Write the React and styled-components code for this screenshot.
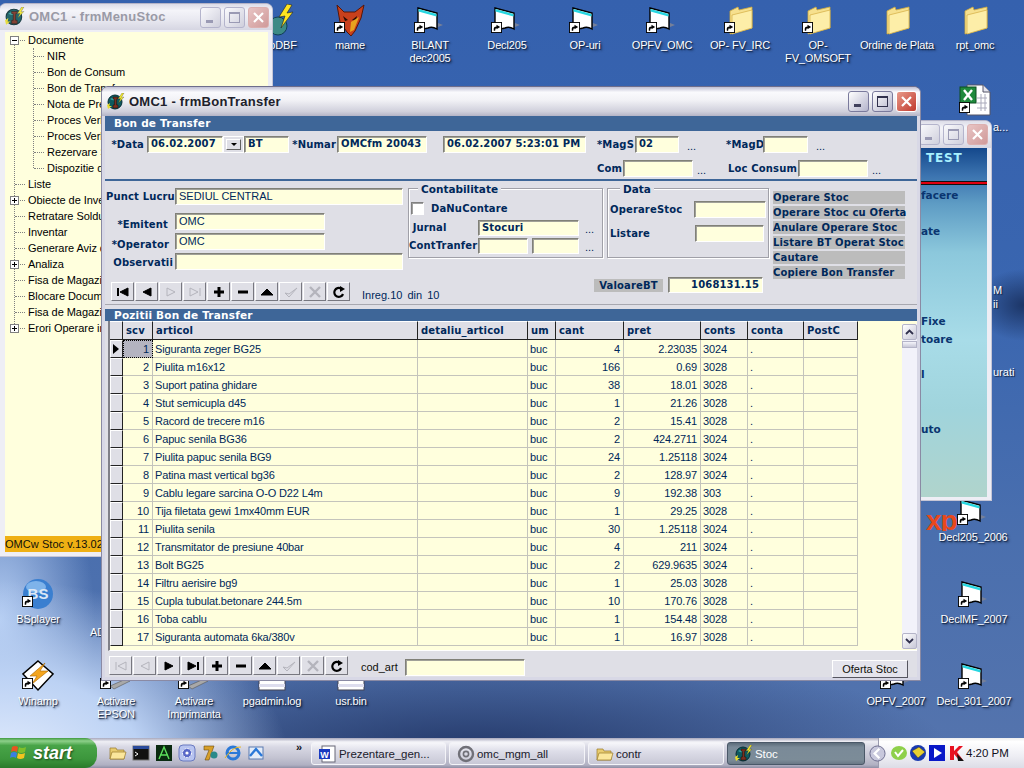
import React from "react";
import styled, { createGlobalStyle } from "styled-components";

const UI_FONT = `"Liberation Sans", "Noto Sans", sans-serif`;
const LABEL_FONT = `"DejaVu Sans", "Liberation Sans", sans-serif`;
const NAVY = "#00285a";

const GlobalStyle = createGlobalStyle`
	html, body {
		margin: 0;
		padding: 0;
		width: 1024px;
		height: 768px;
		overflow: hidden;
		font-family: ${UI_FONT};
		font-size: 11px;
	}
	* { box-sizing: border-box; }
`;

const Desktop = styled.div`
	position: relative;
	width: 1024px;
	height: 768px;
	overflow: hidden;
	background:
		radial-gradient(ellipse 290px 190px at 0px 770px, #e4edfd 0%, #bcd2f4 50%, rgba(150,185,235,0) 100%),
		radial-gradient(ellipse 95px 170px at 0px 620px, #b4cdf3 0%, rgba(150,185,235,0) 100%),
		radial-gradient(ellipse 480px 100px at 470px 750px, #24396a 0%, rgba(36,57,106,0) 100%),
		radial-gradient(ellipse 50px 36px at 1024px 305px, #1c3566 0%, rgba(28,53,102,0) 100%),
		linear-gradient(180deg, #3561ae 0%, #3a66b0 40%, #4a6fae 70%, #5574ad 100%);
`;

const IconCell = styled.div`
	position: absolute;
	left: ${(p) => p.$x - 40}px;
	top: ${(p) => p.$y}px;
	width: 80px;
	display: flex;
	flex-direction: column;
	align-items: center;
`;

const IconBox = styled.div`
	position: relative;
	width: 32px;
	height: 32px;
`;

const IconLabel = styled.div`
	margin-top: 3px;
	color: #fff;
	font: 11px/13px ${UI_FONT};
	letter-spacing: -.15px;
	text-align: center;
	white-space: nowrap;
	text-shadow: 1px 1px 1px #10203c, 2px 2px 2px rgba(16,32,60,.5);
`;

const StrayLabel = styled.span`
	position: absolute;
	left: ${(p) => p.$x}px;
	top: ${(p) => p.$y}px;
	color: #fff;
	font: 11px/13px ${UI_FONT};
	text-shadow: 1px 1px 1px #10203c;
`;

const XpMark = styled.span`
	position: absolute;
	left: 926px;
	top: 509px;
	height: 22px;
	overflow: hidden;
	color: #e8481c;
	font: bold 28px/24px ${UI_FONT};
	letter-spacing: -1px;
`;

const ShortcutBadge = styled.svg`
	position: absolute;
	left: 0;
	bottom: 3px;
	width: 11px;
	height: 11px;
`;

const Shortcut = () => (
	<ShortcutBadge viewBox='0 0 12 12'>
		<rect x='.5' y='.5' width='11' height='11' fill='#fff' stroke='#000' />
		<path d='M3 9.5 L3 7 Q3 5 6 5 L6 3 L10 5.5 L6 8 L6 6.5 Q4.5 6.5 4.5 9.5 Z' fill='#000' />
	</ShortcutBadge>
);

const FlagDoc = () => (
	<svg viewBox='0 0 32 32' width='32' height='32'>
		<path d='M4 4 L23 9 L23 25 Q18 22 14 24 Q8 26 4 22 Z' fill='#fff' stroke='#000' strokeWidth='1.4' />
		<path d='M4.5 5 L22.5 10 L22.5 12.5 L4.5 7.5 Z' fill='#27d6e0' />
		<path d='M24 19 L29 21 L24 23 Z' fill='#76809a' />
	</svg>
);

const FolderIcon = () => (
	<svg viewBox='0 0 32 32' width='32' height='32'>
		<path d='M6 7 L14 3 L15 6 L28 3 L28 24 L6 30 Z' fill='#f6e08e' stroke='#cfa93e' strokeWidth='.8' />
		<path d='M8 11 L28 6 L28 24 L8 30 Z' fill='#fdeea8' stroke='#d8b44c' strokeWidth='.8' />
	</svg>
);

const FoxIcon = () => (
	<svg viewBox='0 0 32 32' width='32' height='32'>
		<path d='M3 1 L10 8 L21 8 L30 1 L27 14 L21 27 L17 32 L13 28 L6 18 Z' fill='#c9401c' stroke='#5a1606' />
		<path d='M9 12 L14 16 L11 17 Z M23 12 L18 16 L22 17 Z' fill='#2a0e05' />
		<path d='M17 18 L25 13 L20 26 L16 28 Z' fill='#e7a21f' />
	</svg>
);

const GlobeBolt = () => (
	<svg viewBox='0 0 32 32' width='32' height='32'>
		<circle cx='11' cy='22' r='9' fill='#3d8a86' stroke='#123f55' />
		<path d='M20 0 L12 13 L18 12 L14 24 L26 8 L20 9 L25 1 Z' fill='#ffe420' stroke='#222' strokeWidth='.6' />
	</svg>
);

const ExcelDoc = () => (
	<svg viewBox='0 0 32 32' width='32' height='32'>
		<path d='M8 1 L24 1 L31 8 L31 31 L8 31 Z' fill='#fff' stroke='#556' />
		<path d='M24 1 L24 8 L31 8' fill='#e4e4ee' stroke='#556' />
		<path d='M18 14 H28 M18 19 H28 M18 24 H28 M22 10 V27 M26 10 V27' stroke='#aab' fill='none' />
		<rect x='1' y='3' width='16' height='16' fill='#1f8a3c' stroke='#0c4f20' />
		<path d='M5 6 L13 16 M13 6 L5 16' stroke='#fff' strokeWidth='2.4' />
	</svg>
);

const BsIcon = () => (
	<svg viewBox='0 0 32 32' width='32' height='32'>
		<circle cx='16' cy='16' r='15' fill='#3a7fd0' />
		<ellipse cx='14' cy='9' rx='10' ry='6' fill='#7eb3ea' />
		<text x='16' y='21' textAnchor='middle' fontFamily='"Liberation Sans", sans-serif' fontWeight='bold' fontSize='15' fill='#dce8f6'>BS</text>
	</svg>
);

const WinampIcon = () => (
	<svg viewBox='0 0 32 32' width='32' height='32'>
		<path d='M16 1 L31 14 L16 30 L1 14 Z' fill='#fff' stroke='#000' strokeWidth='1.5' />
		<path d='M23 3 L8 16 L15 16 L10 24 L26 11 L18 11 Z' fill='#f4a51d' stroke='#a86400' strokeWidth='.6' />
	</svg>
);

const PaperIcon = () => (
	<svg viewBox='0 0 32 32' width='32' height='32'>
		<rect x='3' y='2' width='26' height='28' fill='#fff' stroke='#445' />
		<rect x='3' y='24' width='26' height='3' fill='#dde' />
	</svg>
);

const PenIcon = () => (
	<svg viewBox='0 0 32 32' width='32' height='32'>
		<path d='M10 26 L26 19 L30 21 L14 29 Z' fill='#a8a8a8' stroke='#555' strokeWidth='.6' />
	</svg>
);

const AppIcon = ({ size = 18, dim }) => (
	<svg viewBox='0 0 18 18' width={size} height={size} opacity={dim ? 0.9 : 1}>
		<circle cx='8' cy='9' r='7' fill='#0e5a5f' stroke='#062c33' />
		<path d='M3 6 Q7 3 12 5 Q9 8 5 7 Z' fill='#35a0a0' />
		<path d='M6 4 H11 V6 H9.6 V12 H11 V15 H6 V12 H7.4 V6 H6 Z' fill='#7a2f20' stroke='#1b0d08' strokeWidth='.5' />
		<path d='M15 0 L11 6 L13.5 5.6 L11.5 10 L17 4 L14.4 4.4 L17 0 Z' fill='#f4ea2c' stroke='#333' strokeWidth='.3' />
		<path d='M0 12 L3 10 L2.4 13 L5 13 L1 16 Z' fill='#e8dc30' />
	</svg>
);

const desktopIcons = [
	{ x: 283, y: 4, label: "oDBF", art: <GlobeBolt /> },
	{ x: 350, y: 4, label: "mame", art: <FoxIcon />, link: true },
	{ x: 430, y: 4, label: <>BILANT<br />dec2005</>, art: <FlagDoc />, link: true },
	{ x: 507, y: 4, label: "Decl205", art: <FlagDoc />, link: true },
	{ x: 585, y: 4, label: "OP-uri", art: <FlagDoc />, link: true },
	{ x: 662, y: 4, label: "OPFV_OMC", art: <FlagDoc />, link: true },
	{ x: 740, y: 4, label: "OP- FV_IRC", art: <FolderIcon />, link: true },
	{ x: 818, y: 4, label: <>OP-<br />FV_OMSOFT</>, art: <FolderIcon />, link: true },
	{ x: 897, y: 4, label: "Ordine de Plata", art: <FolderIcon /> },
	{ x: 975, y: 4, label: "rpt_omc", art: <FolderIcon /> },
	{ x: 975, y: 84, label: "", art: <ExcelDoc />, link: true },
	{ x: 973, y: 496, label: "Decl205_2006", art: <FlagDoc />, link: true },
	{ x: 974, y: 578, label: "DeclMF_2007", art: <FlagDoc />, link: true },
	{ x: 974, y: 660, label: "Decl_301_2007", art: <FlagDoc />, link: true },
	{ x: 896, y: 660, label: "OPFV_2007", art: <FlagDoc />, link: true },
	{ x: 38, y: 578, label: "BSplayer", art: <BsIcon />, link: true },
	{ x: 38, y: 660, label: "Winamp", art: <WinampIcon />, link: true },
	{ x: 116, y: 660, label: <>Activare<br />EPSON</>, art: <PenIcon />, link: true },
	{ x: 194, y: 660, label: <>Activare<br />Imprimanta</>, art: <PenIcon />, link: true },
	{ x: 272, y: 660, label: "pgadmin.log", art: <PaperIcon /> },
	{ x: 351, y: 660, label: "usr.bin", art: <PaperIcon /> },
];

const Window = styled.div`
	position: absolute;
	left: ${(p) => p.$x}px;
	top: ${(p) => p.$y}px;
	width: ${(p) => p.$w}px;
	height: ${(p) => p.$h}px;
	display: flex;
	flex-direction: column;
	border-radius: 7px 7px 0 0;
	border: 1px solid ${(p) => (p.$dim ? "#c6c6d6" : "#8a8aa4")};
	border-top-color: ${(p) => (p.$dim ? "#b4b4c8" : "#6e6e8c")};
	background: ${(p) => (p.$dim ? "#eeeef5" : "#d8d8e6")};
	overflow: hidden;
`;

const TitleBar = styled.div`
	flex: none;
	height: ${(p) => p.$h || 29}px;
	display: flex;
	align-items: center;
	gap: 3px;
	padding: 0 3px 0 5px;
	background: ${(p) =>
		p.$dim
			? "linear-gradient(#dcdce8, #f4f4f9 25%, #e9e9f1 60%, #d6d6e2)"
			: "linear-gradient(#c0c0d4, #fafafd 18%, #f2f2f6 45%, #cfcfdb 85%, #b4b4c6)"};
`;

const TitleText = styled.span`
	flex: 1;
	margin-left: 1px;
	color: ${(p) => (p.$dim ? "#9a9aa6" : "#20202a")};
	font: bold 13px/14px ${UI_FONT};
	letter-spacing: .25px;
	white-space: nowrap;
`;

const CtlButton = styled.div`
	flex: none;
	width: 21px;
	height: 21px;
	display: flex;
	align-items: center;
	justify-content: center;
	border-radius: 3px;
	border: 1px solid ${(p) => (p.$close ? (p.$dim ? "#dcb0b0" : "#fff") : p.$dim ? "#b4b4cc" : "#7a7a9c")};
	background: ${(p) =>
		p.$close
			? p.$dim
				? "linear-gradient(135deg, #e8c4c4, #d09a9a)"
				: "linear-gradient(135deg, #e89a8a, #c03a2e)"
			: p.$dim
				? "linear-gradient(135deg, #fafafd, #cfcfdc)"
				: "linear-gradient(135deg, #fff, #b4b4cc)"};
`;

const WinControls = ({ dim }) => (
	<>
		<CtlButton $dim={dim}>
			<svg width='13' height='13' viewBox='0 0 13 13'><rect x='2' y='9' width='7' height='3' fill={dim ? "#9a9ab4" : "#40405c"} /></svg>
		</CtlButton>
		<CtlButton $dim={dim}>
			<svg width='13' height='13' viewBox='0 0 13 13'><rect x='1.5' y='1.5' width='10' height='10' fill='none' stroke={dim ? "#9a9ab4" : "#30304c"} /><rect x='1' y='1' width='11' height='2' fill={dim ? "#9a9ab4" : "#30304c"} /></svg>
		</CtlButton>
		<CtlButton $close $dim={dim}>
			<svg width='13' height='13' viewBox='0 0 13 13'><path d='M2 2 L11 11 M11 2 L2 11' stroke='#fff' strokeWidth='2.2' /></svg>
		</CtlButton>
	</>
);

/* frmMenuStoc */
const TreePane = styled.div`
	flex: 1;
	margin: 2px 4px 4px 5px;
	background: #ffffdd;
	display: flex;
	flex-direction: column;
	justify-content: space-between;
	min-height: 0;
`;

const Tree = styled.div`
	position: relative;
	&::before {
		content: "";
		position: absolute;
		left: 9px;
		top: 12px;
		height: 288px;
		border-left: 1px dotted #808080;
	}
`;

const TreeRow = styled.div`
	position: relative;
	height: 16px;
	padding-left: ${(p) => (p.$child ? 42 : 23)}px;
	font: 11px/16px ${UI_FONT};
	letter-spacing: -.05px;
	color: #000;
	white-space: nowrap;
	&::before {
		content: "";
		position: absolute;
		left: ${(p) => (p.$child ? 29 : 10)}px;
		top: 8px;
		width: 10px;
		border-top: 1px dotted #808080;
	}
`;

const TreeChildren = styled.div`
	position: relative;
	&::before {
		content: "";
		position: absolute;
		left: 28px;
		top: 0;
		height: 120px;
		border-left: 1px dotted #808080;
	}
`;

const Expander = styled.span`
	position: absolute;
	left: 5px;
	top: 4px;
	width: 9px;
	height: 9px;
	background: #fff;
	border: 1px solid #808080;
	z-index: 1;
	&::before {
		content: "";
		position: absolute;
		left: 1px;
		top: 3px;
		width: 5px;
		height: 1px;
		background: #000;
	}
	&::after {
		content: "";
		display: ${(p) => (p.$open ? "none" : "block")};
		position: absolute;
		left: 3px;
		top: 1px;
		width: 1px;
		height: 5px;
		background: #000;
	}
`;

const StatusBar = styled.div`
	flex: none;
	height: 16px;
	background: #efb014;
	color: #10100a;
	font: 11px/16px ${UI_FONT};
	letter-spacing: .05px;
	white-space: nowrap;
`;

/* background TEST window */
const WaterPane = styled.div`
	flex: 1;
	margin: 0 4px 3px 0;
	padding-left: 20px;
	display: flex;
	flex-direction: column;
	background: linear-gradient(#14488c 0, #3c74b0 8%, #5e9cc4 16%, #8cc8dc 30%, #a8dce8 55%, #a0d4dc 75%, #b0d4cc 100%);
`;

const WaterTitle = styled.div`
	height: 20px;
	padding-left: 5px;
	color: #a8f0ff;
	font: bold 12px/20px ${LABEL_FONT};
	letter-spacing: .8px;
`;

const RedRule = styled.div`
	height: 4px;
	margin: 13px 0 0 -20px;
	background: #e00010;
	border-top: 1px solid #111;
	border-bottom: 1px solid #111;
`;

const WaterItem = styled.div`
	margin-top: ${(p) => p.$gap}px;
	color: #0a3570;
	font: bold 10.5px/14px ${LABEL_FONT};
`;

/* frmBonTransfer */
const Frame = styled.div`
	flex: 1;
	margin: 0 3px 3px 3px;
	display: flex;
	flex-direction: column;
	background: #dfdfe6;
	min-height: 0;
`;

const BlueBar = styled.div`
	flex: none;
	height: ${(p) => p.$h}px;
	background: #3e6698;
	color: #fff;
	font: bold 10.5px/${(p) => p.$h}px ${LABEL_FONT};
	padding-left: 9px;
	letter-spacing: .2px;
	overflow: hidden;
`;

const HeaderForm = styled.div`
	flex: none;
	height: 50px;
	padding-top: 5px;
	display: flex;
	flex-direction: column;
	gap: 7px;
	border-bottom: 2px solid #3e6698;
`;

const FormRow = styled.div`
	display: flex;
	align-items: center;
	height: 17px;
`;

const Caption = styled.span`
	flex: none;
	width: ${(p) => p.$w}px;
	margin-top: ${(p) => p.$mt || 0}px;
	padding-right: ${(p) => p.$pr ?? 1}px;
	text-align: ${(p) => (p.$left ? "left" : "right")};
	color: ${NAVY};
	font: bold 10px/14px ${LABEL_FONT};
	letter-spacing: .15px;
	white-space: nowrap;
`;

const Field = styled.div`
	flex: none;
	width: ${(p) => p.$w}px;
	height: ${(p) => p.$h || 17}px;
	padding: 0 3px;
	background: #ffffdd;
	border: 1px solid;
	border-color: #808078 #fff #fff #808078;
	box-shadow: inset 1px 1px 0 #a0a098;
	color: ${NAVY};
	font: ${(p) => (p.$plain ? "normal 11px" : "bold 10px")} / ${(p) => (p.$h || 17) - 3}px ${(p) => (p.$plain ? UI_FONT : LABEL_FONT)};
	text-align: ${(p) => (p.$right ? "right" : "left")};
	letter-spacing: ${(p) => (p.$plain ? "0" : ".15px")};
	white-space: nowrap;
	overflow: hidden;
`;

const Combo = styled.div`
	flex: none;
	width: 21px;
	height: 17px;
	padding: 2px;
	background: #dfdfe6;
	border: 1px solid #fff;
	display: flex;
`;

const ComboArrow = styled.div`
	flex: 1;
	display: flex;
	align-items: center;
	justify-content: center;
	border: 1px solid;
	border-color: #fff #606060 #606060 #fff;
	background: #dfdfe6;
	&::after {
		content: "";
		border-left: 3px solid transparent;
		border-right: 3px solid transparent;
		border-top: 3px solid #000;
	}
`;

const Ellipsis = styled.span`
	flex: none;
	width: ${(p) => p.$w}px;
	padding-left: ${(p) => p.$pl ?? 8}px;
	color: ${NAVY};
	font: 11px/14px ${UI_FONT};
	align-self: flex-end;
`;

const Gap = styled.span`
	flex: none;
	width: ${(p) => p.$w}px;
`;

const MidSection = styled.div`
	flex: none;
	height: 124px;
	padding: 7px 0 0 1px;
	display: grid;
	grid-template-columns: 298px 195px 162px 132px;
	grid-template-rows: 85px 1fr;
	column-gap: 4px;
	row-gap: 4px;
	border-bottom: 1px solid #a8a8b0;
`;

const MidSpacer = styled.div`
	flex: none;
	height: 4px;
`;

const LeftForm = styled.div`
	display: flex;
	flex-direction: column;
`;

const LeftRow = styled(FormRow)`
	margin-top: ${(p) => p.$gap || 0}px;
`;

const GroupBox = styled.div`
	position: relative;
	height: 70px;
	border: 1px solid #a0a0a8;
	box-shadow: inset 1px 1px 0 #fff, 1px 1px 0 #fff;
	display: flex;
	flex-direction: column;
	padding: ${(p) => p.$pad};
`;

const GroupTitle = styled.span`
	position: absolute;
	left: ${(p) => p.$left}px;
	top: -5px;
	padding: 0 3px;
	background: #dfdfe6;
	color: ${NAVY};
	font: bold 10.5px/11px ${LABEL_FONT};
`;

const CheckRow = styled.div`
	display: flex;
	align-items: center;
	gap: 7px;
	height: 13px;
	margin-bottom: 4px;
	padding-left: 2px;
`;

const CheckBox = styled.span`
	flex: none;
	width: 13px;
	height: 13px;
	background: #fff;
	border: 1px solid;
	border-color: #808080 #fff #fff #808080;
	box-shadow: inset 1px 1px 0 #a0a0a0;
`;

const GroupRow = styled(FormRow)`
	margin-top: ${(p) => p.$gap || 0}px;
`;

const ActionList = styled.div`
	grid-column: 4;
	grid-row: 1 / 3;
	padding-top: 3px;
	display: flex;
	flex-direction: column;
	gap: 2px;
`;

const ActionButton = styled.div`
	height: 13px;
	background: #bcbcbc;
	color: ${NAVY};
	font: bold 10px/13px ${LABEL_FONT};
	letter-spacing: .15px;
	white-space: nowrap;
`;

const ToolRow = styled.div`
	display: flex;
	align-items: flex-start;
`;

const NavBar = styled.div`
	display: flex;
	flex: none;
	gap: 1px;
	padding-left: ${(p) => p.$pl}px;
	margin-top: ${(p) => p.$mt}px;
`;

const NavButton = styled.div`
	width: 23px;
	height: ${(p) => p.$h}px;
	display: flex;
	align-items: center;
	justify-content: center;
	background: #dfdfe6;
	border: 1px solid;
	border-color: #fff #77777f #77777f #fff;
	color: ${(p) => (p.$off ? "#b8b8c0" : "#000")};
`;

const RecordInfo = styled.span`
	margin: 12px 0 0 12px;
	color: ${NAVY};
	font: 11px/13px ${UI_FONT};
	white-space: nowrap;
	word-spacing: 2px;
`;

const TotalRow = styled.div`
	grid-column: 2 / 4;
	display: flex;
	justify-content: flex-end;
	align-items: flex-start;
	gap: 5px;
	padding-right: 6px;
`;

const TotalLabel = styled.span`
	width: 69px;
	height: 13px;
	margin-top: 2px;
	background: #bcbcbc;
	color: ${NAVY};
	font: bold 10px/13px ${LABEL_FONT};
	letter-spacing: .15px;
	text-align: center;
`;

const GridArea = styled.div`
	flex: none;
	height: 330px;
	margin-left: 3px;
	display: flex;
	background: #ffffdd;
	border-left: 2px solid #808088;
	border-bottom: 1px solid #fff;
`;

const GridTable = styled.table`
	flex: none;
	width: 748px;
	table-layout: fixed;
	border-collapse: separate;
	border-spacing: 0;
	align-self: flex-start;
`;

const HeadCell = styled.th`
	height: 19px;
	padding: 0 0 0 3px;
	background: #dfdfe6;
	border-right: 1px solid #222;
	border-bottom: 1px solid #222;
	border-top: 1px solid #fff;
	color: ${NAVY};
	font: bold 10px/14px ${LABEL_FONT};
	letter-spacing: .15px;
	text-align: left;
`;

const Cell = styled.td`
	height: 18px;
	padding: 1px ${(p) => (p.$right ? 3 : 2)}px 0 2px;
	border-right: 1px solid #c4c4bc;
	border-bottom: 1px solid #c4c4bc;
	color: ${NAVY};
	font: 11px/14px ${UI_FONT};
	letter-spacing: -.15px;
	text-align: ${(p) => (p.$right ? "right" : "left")};
	white-space: nowrap;
	overflow: hidden;
	${(p) => p.$current && `
		background: #b4b4c0;
		outline: 1px dotted #000;
		outline-offset: -1px;
	`}
`;

const RowMark = styled.td`
	height: 18px;
	padding: 0;
	background: #dfdfe6;
	border: 1px solid;
	border-color: #fff #222 #222 #fff;
`;

const CurrentArrow = styled.div`
	width: 0;
	height: 0;
	margin-left: 2px;
	border-top: 5px solid transparent;
	border-bottom: 5px solid transparent;
	border-left: 6px solid #000;
`;

const Scrollbar = styled.div`
	margin: 3px 0 1px auto;
	width: 15px;
	background: #f2f2fa;
	display: flex;
	flex-direction: column;
	justify-content: space-between;
`;

const ScrollTop = styled.div`
	display: flex;
	flex-direction: column;
	gap: 1px;
`;

const ScrollButton = styled.div`
	height: 16px;
	display: flex;
	align-items: center;
	justify-content: center;
	background: linear-gradient(135deg, #fff, #c8c8d8);
	border: 1px solid #b4b4c8;
	border-radius: 2px;
`;

const ScrollThumb = styled.div`
	height: 7px;
	background: linear-gradient(#f4f4fa, #c8c8d8);
	border: 1px solid #b4b4c8;
`;

const FooterBar = styled.div`
	flex: 1;
	display: flex;
	align-items: flex-start;
	padding-right: 9px;
`;

const CodLabel = styled.span`
	margin: 9px 7px 0 13px;
	color: #10100a;
	font: 11px/14px ${UI_FONT};
`;

const CodField = styled(Field)`
	margin-top: 8px;
`;

const OfferButton = styled.div`
	margin: 9px 0 0 auto;
	width: 76px;
	height: 18px;
	background: #e4e4ec;
	border: 1px solid;
	border-color: #fff #55555f #55555f #fff;
	color: #10100a;
	font: 11px/17px ${UI_FONT};
	text-align: center;
`;

/* taskbar */
const Taskbar = styled.div`
	position: absolute;
	left: 0;
	right: 0;
	bottom: 0;
	height: 30px;
	display: flex;
	align-items: stretch;
	background: linear-gradient(#a8a8bc 0, #eeeef4 12%, #d8d8e4 30%, #c4c4d2 65%, #b0b0c2 90%, #8e8ea4);
`;

const StartButton = styled.div`
	flex: none;
	width: 97px;
	display: flex;
	align-items: center;
	gap: 5px;
	padding-left: 10px;
	border-radius: 0 12px 12px 0;
	background: linear-gradient(#3f9a3f 0, #8ed08a 10%, #48a448 25%, #3c963c 70%, #2a7a2a 100%);
	color: #fff;
	font: italic bold 18px/20px ${UI_FONT};
	text-shadow: 1px 1px 2px #1a4a1a;
`;

const QuickLaunch = styled.div`
	flex: none;
	width: 214px;
	padding-left: 12px;
	display: flex;
	align-items: center;
	gap: 5px;
	position: relative;
`;

const More = styled.span`
	position: absolute;
	right: 9px;
	top: 3px;
	font: bold 11px/13px ${UI_FONT};
	color: #10101c;
`;

const TaskList = styled.div`
	flex: 1;
	display: flex;
	gap: 3px;
	padding: 4px 0 3px 0;
`;

const TaskButton = styled.div`
	width: ${(p) => p.$w}px;
	flex: none;
	display: flex;
	align-items: center;
	gap: 2px;
	padding-left: 7px;
	border-radius: 3px;
	border: 1px solid ${(p) => (p.$active ? "#4a5868" : "#f4f4f8")};
	background: ${(p) => (p.$active ? "linear-gradient(#5c6c7a, #7a8a98 20%, #7c8c98 80%, #6a7886)" : "linear-gradient(#f6f6fa, #ddddE8 40%, #c8c8d6)")};
	color: ${(p) => (p.$active ? "#fff" : "#20202c")};
	font: 11.5px/14px ${UI_FONT};
	letter-spacing: -.05px;
	white-space: nowrap;
	overflow: hidden;
`;

const Tray = styled.div`
	flex: none;
	width: 146px;
	display: flex;
	align-items: center;
	gap: 1px;
	padding-right: 18px;
	background: linear-gradient(#eee 0, #fff 12%, #eeeef4 60%, #dcdce6);
	border-left: 1px solid #9a9aae;
`;

const TrayChevron = styled.svg`
	flex: none;
	width: 17px;
	height: 17px;
	margin: 0 3px 0 -10px;
`;

const TrayClock = styled.span`
	margin-left: auto;
	color: #10101c;
	font: 11.5px/14px ${UI_FONT};
	white-space: nowrap;
`;

const Icon16 = styled.svg`
	flex: none;
	width: 18px;
	height: 18px;
`;

const WinFlag = () => (
	<Icon16 viewBox='0 0 18 18'>
		<path d='M2 3 Q5 1 8 3 L7 8 Q4 6 1 8 Z' fill='#e8531f' />
		<path d='M9 3 Q12 5 16 3 L15 8 Q11 10 8 8 Z' fill='#7fbf2a' />
		<path d='M1 9 Q4 7 7 9 L6 14 Q3 12 0 14 Z' fill='#3a7fe0' />
		<path d='M8 9 Q11 11 15 9 L14 14 Q10 16 7 14 Z' fill='#f4c41e' />
	</Icon16>
);

const SmallFolder = () => (
	<Icon16 viewBox='0 0 18 18'>
		<path d='M1 4 H7 L8 6 H15 V15 H1 Z' fill='#e8cc70' stroke='#9a7a2a' strokeWidth='.7' />
		<path d='M3 8 H17 L15 15 H1 Z' fill='#fbe79c' stroke='#9a7a2a' strokeWidth='.7' />
	</Icon16>
);

const quickIcons = [
	<SmallFolder key='q1' />,
	<Icon16 key='q2' viewBox='0 0 18 18'>
		<rect x='1' y='2' width='16' height='14' fill='#111' stroke='#777' />
		<rect x='1' y='2' width='16' height='3' fill='#2a4a9a' />
		<path d='M3 8 L6 10 L3 12' stroke='#fff' fill='none' />
	</Icon16>,
	<Icon16 key='q3' viewBox='0 0 18 18'>
		<rect x='1' y='1' width='16' height='16' fill='#0a2a10' />
		<path d='M4 15 L9 3 L14 15 M5 11 H13' stroke='#5ce05c' fill='none' strokeWidth='1.4' />
	</Icon16>,
	<Icon16 key='q4' viewBox='0 0 18 18'>
		<rect x='1' y='1' width='16' height='16' rx='4' fill='#b8c4f0' stroke='#6a7ac0' />
		<circle cx='9' cy='9' r='4.5' fill='#5868c8' stroke='#fff' strokeDasharray='2 1' />
		<circle cx='9' cy='9' r='1.6' fill='#fff' />
	</Icon16>,
	<Icon16 key='q5' viewBox='0 0 18 18'>
		<path d='M3 2 H13 L8 16 H4 L8 6 H3 Z' fill='#d8a02a' stroke='#6a4a10' strokeWidth='.6' />
		<circle cx='13' cy='11' r='3.5' fill='#2a8a8a' />
	</Icon16>,
	<Icon16 key='q6' viewBox='0 0 18 18'>
		<circle cx='9' cy='9' r='6' fill='none' stroke='#2a78d8' strokeWidth='3' />
		<path d='M3 9 H15' stroke='#2a78d8' strokeWidth='2' />
		<path d='M1 14 Q9 2 17 3' stroke='#e8b820' fill='none' />
	</Icon16>,
	<Icon16 key='q7' viewBox='0 0 18 18'>
		<rect x='2' y='3' width='14' height='12' fill='#e4ecf8' stroke='#5a7ab0' />
		<path d='M3 12 L9 5 L15 12' stroke='#2a78d8' strokeWidth='2.4' fill='none' />
	</Icon16>,
];

const trayIcons = [
	<Icon16 key='t2' viewBox='0 0 18 18'>
		<ellipse cx='9' cy='9' rx='8' ry='7' fill='#8ed04a' />
		<path d='M5 8 L8 12 L13 6' stroke='#fff' strokeWidth='2' fill='none' />
	</Icon16>,
	<Icon16 key='t3' viewBox='0 0 18 18'>
		<circle cx='9' cy='9' r='8' fill='#1a3ab0' />
		<path d='M3 7 L10 3 L16 8 L9 14 Z' fill='#e8d030' stroke='#333' strokeWidth='.5' />
	</Icon16>,
	<Icon16 key='t4' viewBox='0 0 18 18'>
		<rect x='1' y='1' width='16' height='16' fill='#0a18c8' />
		<path d='M6 4 L14 9 L6 14 Z' fill='#fff' />
	</Icon16>,
	<Icon16 key='t5' viewBox='0 0 18 18'>
		<path d='M3 2 H7 V7 L12 2 H16 L10 8 L16 16 H12 L7 10 V16 H3 Z' fill='#e81020' />
		<path d='M10 10 L17 17 H11 Z' fill='#111' />
	</Icon16>,
];

const NavGlyph = ({ name, off }) => {
	const c = off ? "#b4b4bc" : "#000";
	const fill = off ? "none" : "#000";
	const glyphs = {
		first: <><path d='M2 3 V11' stroke={c} strokeWidth={off ? 1 : 2} /><path d='M12 3 L4 7 L12 11 Z' fill={fill} stroke={c} /></>,
		prev: <path d='M11 3 L3 7 L11 11 Z' fill={fill} stroke={c} />,
		next: <path d='M3 3 L11 7 L3 11 Z' fill={fill} stroke={c} />,
		last: <><path d='M12 3 V11' stroke={c} strokeWidth={off ? 1 : 2} /><path d='M2 3 L10 7 L2 11 Z' fill={fill} stroke={c} /></>,
		add: <path d='M7 2 V12 M2 7 H12' stroke={c} strokeWidth='3' />,
		del: <path d='M2 7 H12' stroke={c} strokeWidth='3' />,
		up: <path d='M1 10 L7 4 L13 10 Z' fill={fill} stroke={c} />,
		ok: <path d='M1 8 L5 12 L13 3 L5 9 Z' fill='none' stroke={c} />,
		no: <path d='M2 2 L12 12 M12 2 L2 12' stroke={c} strokeWidth='2.4' fill='none' />,
		redo: <><path d='M11 9 A4.5 4.5 0 1 1 9 3.5' fill='none' stroke={c} strokeWidth='2.2' /><path d='M8 1 L13 4 L8 7 Z' fill={fill} /></>,
	};
	return <svg width='14' height='14' viewBox='0 0 14 14'>{glyphs[name]}</svg>;
};

const navOrder = ["first", "prev", "next", "last", "add", "del", "up", "ok", "no", "redo"];

const Navigator = ({ disabled, pl, mt, h }) => (
	<NavBar $pl={pl} $mt={mt}>
		{navOrder.map((n) => (
			<NavButton key={n} $h={h} $off={disabled.includes(n)}>
				<NavGlyph name={n} off={disabled.includes(n)} />
			</NavButton>
		))}
	</NavBar>
);

const menuItems = ["NIR", "Bon de Consum", "Bon de Transfer", "Nota de Predare", "Proces Verbal", "Proces Verbal", "Rezervare Stoc", "Dispozitie de"];
const menuRoots = [
	{ text: "Liste" },
	{ text: "Obiecte de Inventar", more: true },
	{ text: "Retratare Solduri" },
	{ text: "Inventar" },
	{ text: "Generare Aviz de" },
	{ text: "Analiza", more: true },
	{ text: "Fisa de Magazie" },
	{ text: "Blocare Documente" },
	{ text: "Fisa de Magazie" },
	{ text: "Erori Operare in", more: true },
];

const columns = [
	{ key: "mark", w: 13 },
	{ key: "scv", w: 30, title: "scv" },
	{ key: "articol", w: 265, title: "articol" },
	{ key: "detaliu", w: 110, title: "detaliu_articol" },
	{ key: "um", w: 28, title: "um" },
	{ key: "cant", w: 68, title: "cant" },
	{ key: "pret", w: 77, title: "pret" },
	{ key: "conts", w: 47, title: "conts" },
	{ key: "conta", w: 56, title: "conta" },
	{ key: "postc", w: 54, title: "PostC" },
];

const rows = [
	["Siguranta zeger BG25", "4", "2.23035", "3024"],
	["Piulita m16x12", "166", "0.69", "3028"],
	["Suport patina ghidare", "38", "18.01", "3028"],
	["Stut semicupla d45", "1", "21.26", "3028"],
	["Racord de trecere m16", "2", "15.41", "3028"],
	["Papuc senila BG36", "2", "424.2711", "3024"],
	["Piulita papuc senila BG9", "24", "1.25118", "3024"],
	["Patina mast vertical bg36", "2", "128.97", "3024"],
	["Cablu legare sarcina O-O D22 L4m", "9", "192.38", "303"],
	["Tija filetata gewi 1mx40mm EUR", "1", "29.25", "3028"],
	["Piulita senila", "30", "1.25118", "3024"],
	["Transmitator de presiune 40bar", "4", "211", "3024"],
	["Bolt BG25", "2", "629.9635", "3024"],
	["Filtru aerisire bg9", "1", "25.03", "3028"],
	["Cupla tubulat.betonare 244.5m", "10", "170.76", "3028"],
	["Toba cablu", "1", "154.48", "3028"],
	["Siguranta automata 6ka/380v", "1", "16.97", "3028"],
];

const actions = ["Operare Stoc", "Operare Stoc cu Oferta", "Anulare Operare Stoc", "Listare BT Operat Stoc", "Cautare", "Copiere Bon Transfer"];

const MenuWindow = () => (
	<Window $x={-1} $y={3} $w={274} $h={554} $dim>
		<TitleBar $dim $h={26}>
			<AppIcon size={20} dim />
			<TitleText $dim>OMC1 - frmMenuStoc</TitleText>
			<WinControls dim />
		</TitleBar>
		<TreePane>
			<Tree>
				<TreeRow><Expander $open />Documente</TreeRow>
				<TreeChildren>
					{menuItems.map((t, i) => <TreeRow $child key={i}>{t}</TreeRow>)}
				</TreeChildren>
				{menuRoots.map((r, i) => (
					<TreeRow key={i}>{r.more && <Expander />}{r.text}</TreeRow>
				))}
			</Tree>
			<StatusBar>OMCw Stoc v.13.02</StatusBar>
		</TreePane>
	</Window>
);

const TestWindow = () => (
	<Window $x={900} $y={120} $w={92} $h={381} $dim>
		<TitleBar $dim $h={27}>
			<TitleText />
			<WinControls dim />
		</TitleBar>
		<WaterPane>
			<WaterTitle>TEST</WaterTitle>
			<RedRule />
			<WaterItem $gap={3}>facere</WaterItem>
			<WaterItem $gap={22}>ate</WaterItem>
			<WaterItem $gap={76}>Fixe</WaterItem>
			<WaterItem $gap={4}>toare</WaterItem>
			<WaterItem $gap={21}>l</WaterItem>
			<WaterItem $gap={41}>uto</WaterItem>
		</WaterPane>
	</Window>
);

const BonWindow = () => (
	<Window $x={101} $y={86} $w={820} $h={595}>
		<TitleBar>
			<AppIcon size={18} />
			<TitleText>OMC1 - frmBonTransfer</TitleText>
			<WinControls />
		</TitleBar>
		<Frame>
			<BlueBar $h={15}>Bon de Transfer</BlueBar>
			<HeaderForm>
				<FormRow>
					<Caption $w={42} $pr={3}>*Data</Caption>
					<Field $w={76}>06.02.2007</Field>
					<Combo><ComboArrow /></Combo>
					<Field $w={45}>BT</Field>
					<Caption $w={48}>*Numar</Caption>
					<Field $w={90}>OMCfm 20043</Field>
					<Gap $w={16} />
					<Field $w={143}>06.02.2007 5:23:01 PM</Field>
					<Caption $w={49}>*MagS</Caption>
					<Field $w={44}>02</Field>
					<Ellipsis $w={47}>...</Ellipsis>
					<Caption $w={37}>*MagD</Caption>
					<Field $w={45} />
					<Ellipsis $w={20}>...</Ellipsis>
				</FormRow>
				<FormRow>
					<Caption $w={518}>Com</Caption>
					<Field $w={70} />
					<Ellipsis $w={35} $pl={4}>...</Ellipsis>
					<Caption $w={70}>Loc Consum</Caption>
					<Field $w={70} />
					<Ellipsis $w={20} $pl={4}>...</Ellipsis>
				</FormRow>
			</HeaderForm>
			<MidSection>
				<LeftForm>
					<LeftRow>
						<Caption $w={69}>Punct Lucru</Caption>
						<Field $w={228} $plain>SEDIUL CENTRAL</Field>
					</LeftRow>
					<LeftRow $gap={8}>
						<Caption $w={62} $pr={0} $mt={6}>*Emitent</Caption>
						<Gap $w={7} />
						<Field $w={150} $plain>OMC</Field>
					</LeftRow>
					<LeftRow $gap={3}>
						<Caption $w={63} $pr={0} $mt={7}>*Operator</Caption>
						<Gap $w={6} />
						<Field $w={150} $plain>OMC</Field>
					</LeftRow>
					<LeftRow $gap={3}>
						<Caption $w={68} $mt={2}>Observatii</Caption>
						<Gap $w={1} />
						<Field $w={228} $plain />
					</LeftRow>
				</LeftForm>
				<GroupBox $pad='13px 0 0 0'>
					<GroupTitle $left={9}>Contabilitate</GroupTitle>
					<CheckRow>
						<CheckBox />
						<Caption $w={90} $left>DaNuContare</Caption>
					</CheckRow>
					<GroupRow>
						<Caption $w={69} $left $pr={0}>&nbsp;Jurnal</Caption>
						<Field $w={101} $h={16}>Stocuri</Field>
						<Ellipsis $w={20} $pl={6}>...</Ellipsis>
					</GroupRow>
					<GroupRow $gap={1}>
						<Caption $w={69} $left $pr={0}>ContTranfer</Caption>
						<Field $w={50} $h={16} />
						<Gap $w={4} />
						<Field $w={47} $h={16} />
						<Ellipsis $w={20} $pl={6}>...</Ellipsis>
					</GroupRow>
				</GroupBox>
				<GroupBox $pad='12px 0 0 2px'>
					<GroupTitle $left={12}>Data</GroupTitle>
					<GroupRow>
						<Caption $w={84} $left>OperareStoc</Caption>
						<Field $w={72} />
					</GroupRow>
					<GroupRow $gap={7}>
						<Caption $w={85} $left>Listare</Caption>
						<Field $w={69} />
					</GroupRow>
				</GroupBox>
				<ActionList>
					{actions.map((a) => <ActionButton key={a}>{a}</ActionButton>)}
				</ActionList>
				<ToolRow>
					<Navigator disabled={["next", "last", "ok", "no"]} pl={5} mt={5} h={19} />
					<RecordInfo>Inreg.10 din 10</RecordInfo>
				</ToolRow>
				<TotalRow>
					<TotalLabel>ValoareBT</TotalLabel>
					<Field $w={95} $h={16} $right>1068131.15</Field>
				</TotalRow>
			</MidSection>
			<MidSpacer />
			<BlueBar $h={12}>Pozitii Bon de Transfer</BlueBar>
			<GridArea>
				<GridTable>
					<colgroup>
						{columns.map((c) => <col key={c.key} width={c.w} />)}
					</colgroup>
					<thead>
						<tr>
							{columns.map((c) => <HeadCell key={c.key}>{c.title}</HeadCell>)}
						</tr>
					</thead>
					<tbody>
						{rows.map((r, i) => (
							<tr key={i}>
								<RowMark>{i === 0 && <CurrentArrow />}</RowMark>
								<Cell $right $current={i === 0}>{i + 1}</Cell>
								<Cell>{r[0]}</Cell>
								<Cell />
								<Cell>buc</Cell>
								<Cell $right>{r[1]}</Cell>
								<Cell $right>{r[2]}</Cell>
								<Cell>{r[3]}</Cell>
								<Cell>.</Cell>
								<Cell />
							</tr>
						))}
					</tbody>
				</GridTable>
				<Scrollbar>
					<ScrollTop>
						<ScrollButton>
							<svg width='9' height='6' viewBox='0 0 9 6'><path d='M1 5 L4.5 1.5 L8 5' stroke='#30304c' strokeWidth='1.8' fill='none' /></svg>
						</ScrollButton>
						<ScrollThumb />
					</ScrollTop>
					<ScrollButton>
						<svg width='9' height='6' viewBox='0 0 9 6'><path d='M1 1 L4.5 4.5 L8 1' stroke='#30304c' strokeWidth='1.8' fill='none' /></svg>
					</ScrollButton>
				</Scrollbar>
			</GridArea>
			<FooterBar>
				<Navigator disabled={["first", "prev", "ok", "no"]} pl={4} mt={5} h={19} />
				<CodLabel>cod_art</CodLabel>
				<CodField $w={120} />
				<OfferButton>Oferta Stoc</OfferButton>
			</FooterBar>
		</Frame>
	</Window>
);

const App = () => (
	<Desktop>
		<GlobalStyle />
		<XpMark>xp</XpMark>
		{desktopIcons.map((d, i) => (
			<IconCell key={i} $x={d.x} $y={d.y}>
				<IconBox>
					{d.art}
					{d.link && <Shortcut />}
				</IconBox>
				<IconLabel>{d.label}</IconLabel>
			</IconCell>
		))}
		<StrayLabel $x={90} $y={626}>AD</StrayLabel>
		<StrayLabel $x={993} $y={121}>a...</StrayLabel>
		<StrayLabel $x={993} $y={284}>M</StrayLabel>
		<StrayLabel $x={993} $y={298}>ii</StrayLabel>
		<StrayLabel $x={993} $y={366}>urati</StrayLabel>
		<TestWindow />
		<MenuWindow />
		<BonWindow />
		<Taskbar>
			<StartButton><WinFlag />start</StartButton>
			<QuickLaunch>
				{quickIcons}
				<More>»</More>
			</QuickLaunch>
			<TaskList>
				<TaskButton $w={135}>
					<Icon16 viewBox='0 0 18 18'>
						<rect x='3' y='1' width='13' height='16' fill='#fff' stroke='#667' />
						<rect x='0' y='4' width='11' height='10' fill='#1a3ac0' />
						<text x='5.5' y='12.5' textAnchor='middle' fontFamily='"Liberation Sans", sans-serif' fontWeight='bold' fontSize='9' fill='#fff'>W</text>
					</Icon16>
					Prezentare_gen...
				</TaskButton>
				<TaskButton $w={136}>
					<Icon16 viewBox='0 0 18 18'>
						<circle cx='9' cy='9' r='7' fill='none' stroke='#707078' strokeWidth='2.4' />
						<circle cx='9' cy='9' r='2.6' fill='none' stroke='#707078' strokeWidth='1.6' />
					</Icon16>
					omc_mgm_all
				</TaskButton>
				<TaskButton $w={136}>
					<SmallFolder />
					contr
				</TaskButton>
				<TaskButton $w={138} $active>
					<AppIcon size={18} />
					Stoc
				</TaskButton>
			</TaskList>
			<Tray>
				<TrayChevron viewBox='0 0 18 18'>
					<circle cx='9' cy='9' r='8' fill='#c8c8dc' stroke='#6a6a8c' />
					<path d='M11 4 L6 9 L11 14' stroke='#fff' strokeWidth='2.4' fill='none' />
				</TrayChevron>
				{trayIcons}
				<TrayClock>4:20 PM</TrayClock>
			</Tray>
		</Taskbar>
	</Desktop>
);

export default App;
